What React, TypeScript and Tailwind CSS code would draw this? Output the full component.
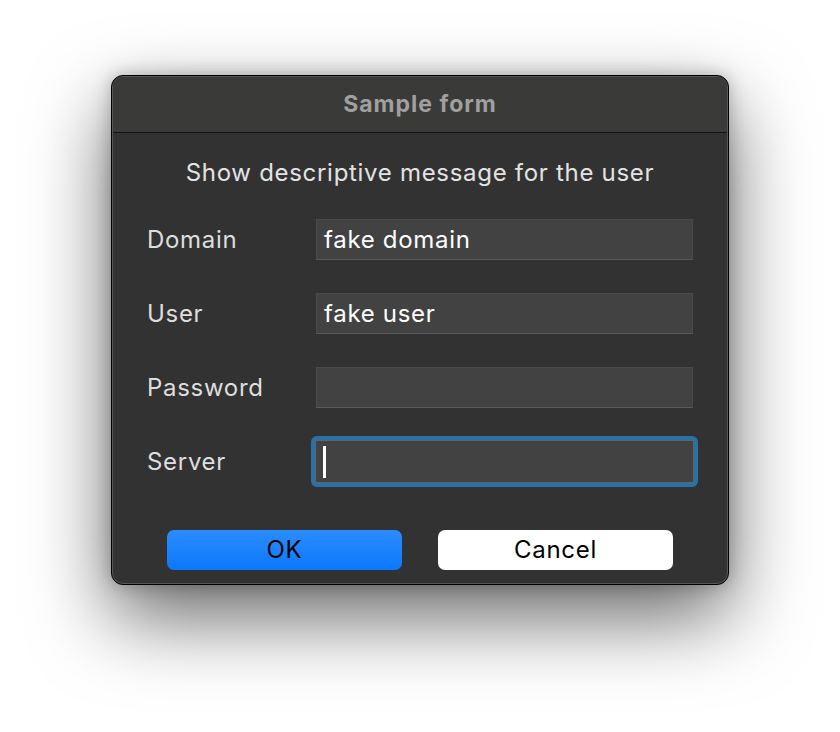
import React from "react";

const FIELDS = [
  { label: "Domain", value: "fake domain" },
  { label: "User", value: "fake user" },
  { label: "Password", value: "" },
];

function Field({ label, value }: { label: string; value: string }) {
  return (
    <div className="flex items-center h-[41px]">
      <div className="w-[169px] text-[24px] tracking-[0.7px] text-[#dedede]">{label}</div>
      <div className="flex-1 h-[41px] bg-[#424242] border border-[#4a4a4a] border-b-[#5a5a5a] flex items-center px-[7px] text-[24px] tracking-[0.7px] text-white">
        {value}
      </div>
    </div>
  );
}

export default function App() {
  return (
    <div
      className="w-[840px] h-[732px] bg-white flex justify-center pt-[75px]"
      style={{ fontFamily: "Inter, 'Open Sans', sans-serif" }}
    >
      <div className="w-[618px] h-[510px] rounded-[12px] border border-black bg-[#323232] shadow-[0_32px_80px_rgba(0,0,0,0.6),0_0_18px_rgba(0,0,0,0.25)] overflow-hidden">
        <div className="h-full rounded-[11px] border border-[#575757] flex flex-col">
          {/* Title bar */}
          <div className="h-[56px] shrink-0 bg-[#3a3a39] border-b border-[#111] flex items-center justify-center text-[23px] tracking-[1px] font-bold text-[#a0a0a0]">
            Sample form
          </div>

          {/* Message */}
          <div className="text-center text-[24px] tracking-[0.7px] text-[#e3e3e3] mt-[26px] leading-[28px]">
            Show descriptive message for the user
          </div>

          {/* Fields */}
          <div className="px-[34px] mt-[32px] flex flex-col gap-[33px]">
            {FIELDS.map((f) => (
              <Field key={f.label} label={f.label} value={f.value} />
            ))}
            <div className="flex items-center h-[41px]">
              <div className="w-[169px] text-[24px] tracking-[0.7px] text-[#dedede]">Server</div>
              <div className="flex-1 h-[51px] -mx-[5px] rounded-[6px] bg-[#2a72a6] p-[4px]">
                <div className="h-full bg-[#424242] border border-[#5a6670] flex items-center pl-[7px]">
                  <div className="w-[3px] h-[32px] bg-white" />
                </div>
              </div>
            </div>
          </div>

          {/* Buttons */}
          <div className="mt-[48px] px-[54px] flex gap-[36px]">
            <button className="flex-1 h-[40px] rounded-[7px] bg-gradient-to-b from-[#2a8dfd] to-[#0a78fd] text-black text-[24px] tracking-[0.7px]">
              OK
            </button>
            <button className="flex-1 h-[40px] rounded-[7px] bg-white text-black text-[24px] tracking-[0.7px]">
              Cancel
            </button>
          </div>
        </div>
      </div>
    </div>
  );
}
